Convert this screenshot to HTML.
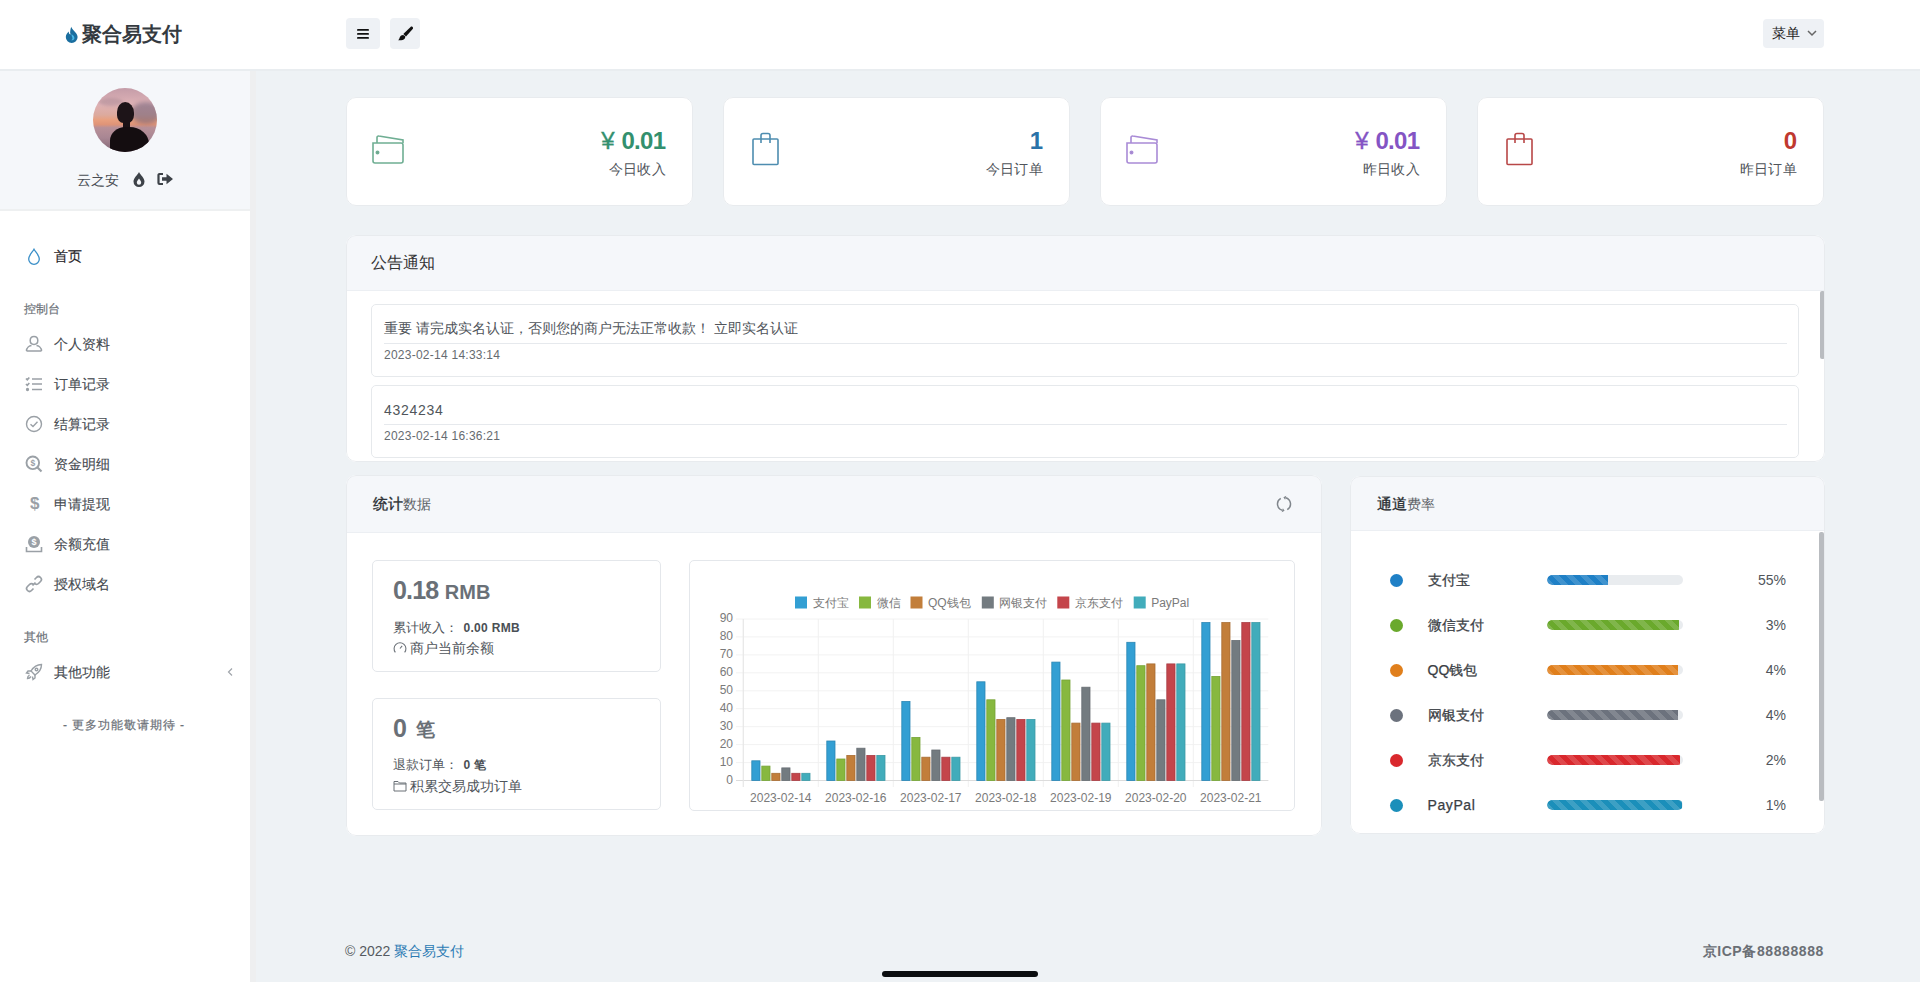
<!DOCTYPE html>
<html><head><meta charset="utf-8">
<style>
*{box-sizing:border-box;margin:0;padding:0}
html,body{width:1920px;height:982px;overflow:hidden}
body{font-family:"Liberation Sans",sans-serif;background:#eef2f5;color:#4a4f55;position:relative;font-size:14px}
.abs{position:absolute}
#top{left:0;top:0;width:1920px;height:71px;background:#fff;border-bottom:2px solid #e9edf0}
#side{left:0;top:71px;width:256px;height:911px;background:#fff;border-right:6px solid #eeeff0}
#prof{left:0;top:71px;width:250px;height:140px;background:#f5f7fa;border-bottom:2px solid #eef0f1}
.card{position:absolute;background:#fff;border-radius:10px}
.card::after,.panel::after{content:"";position:absolute;left:0;top:0;right:0;bottom:0;border:1px solid #e8ebee;border-radius:inherit;pointer-events:none}
.nav{position:absolute;left:54px;font-size:14px;color:#464b51;line-height:16px;white-space:nowrap;-webkit-text-stroke:.1px #464b51}
.navi{position:absolute;left:25px}
.sect{position:absolute;left:24px;font-size:12px;color:#6c7178;line-height:14px;-webkit-text-stroke:.2px #6c7178}
.tbtn{position:absolute;background:#eef1f5;border-radius:4px}
.num{position:absolute;font-size:24px;font-weight:bold;line-height:28px;margin-top:1px;text-align:right;white-space:nowrap}
.lbl{position:absolute;font-size:14px;color:#50555b;line-height:16px;text-align:right;white-space:nowrap;letter-spacing:.3px}
.panel{position:absolute;background:#fff;border-radius:10px;overflow:hidden}
.ph{position:absolute;left:0;top:0;right:0;background:#f5f7fa;border-bottom:1px solid #eceff3}
.ptitle{position:absolute;font-size:15.5px;color:#333;line-height:18px;white-space:nowrap}
.nbox{position:absolute;border:1px solid #e6e9ec;border-radius:5px;background:#fff}
.ntext{position:absolute;left:12px;font-size:14px;color:#50555b;white-space:nowrap;line-height:16px}
.nline{position:absolute;left:12px;right:11px;height:1px;background:#e6e9ed}
.ndate{position:absolute;left:12px;font-size:12px;letter-spacing:.25px;color:#666b70;white-space:nowrap;line-height:14px}
.sbox{position:absolute;border:1px solid #e4e7eb;border-radius:5px;background:#fff}
.crow{position:absolute;left:0;width:475px;height:20px}
.dot{position:absolute;left:39.5px;top:3.5px;width:13px;height:13px;border-radius:50%}
.clbl{position:absolute;left:77.5px;top:2px;font-size:14px;color:#3a3e44;line-height:16px;white-space:nowrap;-webkit-text-stroke:.25px #3a3e44}
.track{position:absolute;left:197px;top:5px;width:136px;height:10px;border-radius:5px;background:#e9ecef;overflow:hidden}
.fill{position:absolute;left:0;top:0;height:10px;border-radius:5px 0 0 5px}
.pct{position:absolute;right:39px;top:2px;font-size:14px;color:#50555b;line-height:16px}
</style></head><body>
<div id="top" class="abs"></div>
<div id="side" class="abs"></div>
<div id="prof" class="abs"></div>

<!-- logo -->
<svg class="abs" style="left:65px;top:26px" width="14" height="17" viewBox="0 0 14 17">
<path d="M6.2 0.8 C6.8 3.6 12.6 7 12.6 11 A5.9 5.9 0 0 1 0.8 11 C0.8 8.6 2.6 6.8 3.8 5.6 C3.6 7.6 4.6 8.6 5.6 8.6 C4.6 6.6 5.4 3.4 6.2 0.8Z" fill="#1a6e9f"/>
<path d="M6.6 8 C7.8 9.4 9.6 10.2 9.4 12.2 C9.2 13.8 7.6 14.6 6 14.2 C7.4 13.6 7.8 12.4 7.2 11.2 C6.8 10.2 6.4 9.4 6.6 8Z" fill="#48b8e8"/>
</svg>
<div class="abs" style="left:82px;top:22px;font-size:20px;font-weight:bold;color:#343a40;line-height:24px;white-space:nowrap;">聚合易支付</div>

<!-- top buttons -->
<div class="tbtn" style="left:346px;top:18px;width:34px;height:31px"></div>
<svg class="abs" style="left:356px;top:27px" width="14" height="13" viewBox="0 0 14 13">
<rect x="1" y="2" width="12" height="1.8" rx=".9" fill="#111"/>
<rect x="1" y="6" width="12" height="1.8" rx=".9" fill="#111"/>
<rect x="1" y="10" width="12" height="1.8" rx=".9" fill="#111"/>
</svg>
<div class="tbtn" style="left:390px;top:18px;width:30px;height:31px"></div>
<svg class="abs" style="left:397px;top:26px" width="16" height="16" viewBox="0 0 16 16">
<path d="M15.9 2.7 C16.4 1.3 15 0 13.6 0.9 L6.3 8 L9 10.5 Z" fill="#111"/>
<path d="M6.1 9 C4.3 9 3 10.2 2.6 11.8 C2.3 13 1.9 13.7 1.1 14.2 C3.5 14.7 6.3 14.1 7.6 12.7 C8.4 11.8 8.4 10.6 8 10.1 Z" fill="#111"/>
</svg>
<div class="tbtn" style="left:1763px;top:19px;width:61px;height:29px"></div>
<div class="abs" style="left:1772px;top:25px;font-size:14px;color:#222;line-height:16px">菜单</div>
<svg class="abs" style="left:1806px;top:29px" width="12" height="8" viewBox="0 0 12 8"><path d="M2 2 L6 6 L10 2" stroke="#666" stroke-width="1.5" fill="none"/></svg>

<!-- avatar -->
<div class="abs" style="left:93px;top:88px;width:64px;height:64px;border-radius:50%;overflow:hidden;background:linear-gradient(180deg,#c49ca8 0%,#deb2b6 25%,#dcaa9e 42%,#e89f7e 50%,#df9478 57%,#b89098 62%,#a88693 78%,#806572 100%)">
<div class="abs" style="left:38px;top:14px;width:30px;height:22px;border-radius:50%;background:rgba(110,95,120,.55);filter:blur(2px)"></div>
<div class="abs" style="left:6px;top:10px;width:24px;height:8px;border-radius:50%;background:rgba(150,120,135,.35);filter:blur(1.5px)"></div>
<div class="abs" style="left:24px;top:14px;width:17px;height:21px;border-radius:48% 52% 38% 38%;background:#1d1418"></div>
<div class="abs" style="left:30px;top:32px;width:7px;height:8px;background:#1a1115"></div>
<div class="abs" style="left:17px;top:39px;width:39px;height:34px;border-radius:40% 50% 0 0;background:#140d10"></div>
</div>
<div class="abs" style="left:77px;top:172px;font-size:14px;color:#484d53;line-height:16px">云之安</div>
<svg class="abs" style="left:132px;top:171px" width="14" height="16" viewBox="0 0 14 16">
<path d="M7 1 C8.5 4 12.5 7 12.5 10.5 A5.5 5.5 0 0 1 1.5 10.5 C1.5 7 5.5 4 7 1Z" fill="#3d4248"/>
<path d="M7 7.5 C7.8 9 9.2 10.2 9.2 11.6 A2.2 2.2 0 0 1 4.8 11.6 C4.8 10.2 6.2 9 7 7.5Z" fill="#f5f7fa"/>
</svg>
<svg class="abs" style="left:157px;top:172px" width="17" height="14" viewBox="0 0 17 14">
<path d="M6 2 H2.5 A1 1 0 0 0 1.5 3 V11 A1 1 0 0 0 2.5 12 H6" stroke="#3d4248" stroke-width="2.2" fill="none"/>
<path d="M5 5.2 H9.5 V1.8 L16 7 L9.5 12.2 V8.8 H5Z" fill="#3d4248"/>
</svg>

<!-- nav -->
<svg class="abs" style="left:27px;top:248px" width="14" height="17" viewBox="0 0 14 17"><path d="M7 1.2 C8.6 4.2 12.3 7.4 12.3 11 A5.3 5.3 0 0 1 1.7 11 C1.7 7.4 5.4 4.2 7 1.2Z" stroke="#3a8fc8" stroke-width="1.3" fill="none"/></svg>
<div class="nav" style="top:248px;color:#1f2327;-webkit-text-stroke:.15px #1f2327">首页</div>
<div class="sect" style="top:302px">控制台</div>

<svg class="navi" style="top:335px" width="18" height="17" viewBox="0 0 18 17" fill="none" stroke="#9aa0a6" stroke-width="1.5"><path d="M9 1.5 C6.5 1.5 5.2 3.4 5.2 5.6 C5.2 7.8 6.8 9.5 9 9.5 C11.2 9.5 12.8 7.8 12.8 5.6 C12.8 3.4 11.5 1.5 9 1.5Z"/><path d="M1.5 16 C1.5 12.5 4.5 10.8 6.5 10.5 M16.5 16 C16.5 12.5 13.5 10.8 11.5 10.5 M1.5 16 H16.5"/></svg>
<div class="nav" style="top:336px">个人资料</div>
<svg class="navi" style="top:376px" width="18" height="16" viewBox="0 0 18 16" fill="none" stroke="#9aa0a6" stroke-width="1.7"><path d="M1 2.5 L2.3 3.8 L4.3 1.5 M1 8 L2.3 9.3 L4.3 7 M7 3 H17 M7 8 H17 M7 13.5 H17"/><circle cx="2.5" cy="13.5" r=".8" fill="#9aa0a6"/></svg>
<div class="nav" style="top:376px">订单记录</div>
<svg class="navi" style="top:415px" width="18" height="18" viewBox="0 0 18 18" fill="none" stroke="#9aa0a6" stroke-width="1.4"><circle cx="9" cy="9" r="7.5"/><path d="M5.5 9.2 L8 11.5 L12.5 6.8"/></svg>
<div class="nav" style="top:416px">结算记录</div>
<svg class="navi" style="top:455px" width="18" height="18" viewBox="0 0 18 18" fill="none" stroke="#9aa0a6" stroke-width="1.9"><circle cx="7.8" cy="7.8" r="6.3"/><path d="M12.5 12.5 L16.5 16.5" stroke-width="2.2"/><text x="7.8" y="10.8" font-size="8.5" text-anchor="middle" fill="#9aa0a6" stroke="none" font-weight="bold" font-family="Liberation Sans">$</text></svg>
<div class="nav" style="top:456px">资金明细</div>
<div class="navi" style="top:494px;left:30px;font-size:17px;font-weight:bold;color:#9aa0a6;line-height:20px">$</div>
<div class="nav" style="top:496px">申请提现</div>
<svg class="navi" style="top:535px" width="18" height="18" viewBox="0 0 18 18"><circle cx="9" cy="7" r="6" fill="#9aa0a6"/><text x="9" y="10.2" font-size="9" text-anchor="middle" fill="#fff" font-weight="bold" font-family="Liberation Sans">$</text><path d="M1.5 12 V16.5 H16.5 V12" stroke="#9aa0a6" stroke-width="1.6" fill="none"/></svg>
<div class="nav" style="top:536px">余额充值</div>
<svg class="navi" style="top:575px" width="18" height="18" viewBox="0 0 18 18" fill="none" stroke="#9aa0a6" stroke-width="1.7"><path d="M7.5 10.5 L10.5 7.5"/><path d="M9.5 4.5 L11.5 2.5 A2.8 2.8 0 0 1 15.5 6.5 L13.5 8.5 A2.8 2.8 0 0 1 9.5 8.5"/><path d="M8.5 13.5 L6.5 15.5 A2.8 2.8 0 0 1 2.5 11.5 L4.5 9.5 A2.8 2.8 0 0 1 8.5 9.5"/></svg>
<div class="nav" style="top:576px">授权域名</div>
<div class="sect" style="top:630px">其他</div>
<svg class="navi" style="top:663px" width="18" height="18" viewBox="0 0 18 18" fill="none" stroke="#9aa0a6" stroke-width="1.4"><path d="M16.5 1.5 C12 1.5 8.5 4 6 8 L10 12 C14 9.5 16.5 6 16.5 1.5Z"/><circle cx="11.5" cy="6.5" r="1.3"/><path d="M6 8 L3 8 L1.5 10 L4.5 10.5 M10 12 L10 15 L8 16.5 L7.5 13.5 M4.5 12 C3 13 2.5 15 2.5 15.5 C3 15.5 5 15 6 13.5"/></svg>
<div class="nav" style="top:664px">其他功能</div>
<svg class="abs" style="left:226px;top:667px" width="8" height="10" viewBox="0 0 8 10"><path d="M6 1.5 L2.5 5 L6 8.5" stroke="#a0a5ab" stroke-width="1.2" fill="none"/></svg>
<div class="abs" style="left:63px;top:718px;font-size:12px;color:#6c7178;line-height:14px;white-space:nowrap;letter-spacing:.95px;-webkit-text-stroke:.2px #6c7178">- 更多功能敬请期待 -</div>

<div class="card" style="left:346px;top:97px;width:347px;height:109px"></div>
<svg class="abs" style="left:371px;top:134px" width="34" height="31" viewBox="0 0 34 31" fill="none" stroke="#6fae93" stroke-width="1.6"><path d="M2 9 V27 A2 2 0 0 0 4 29 H30 A2 2 0 0 0 32 27 V11 A2 2 0 0 0 30 9 H2Z"/><path d="M6 9 V3.5 A1.5 1.5 0 0 1 7.8 2 L32 6 V9"/><circle cx="6.5" cy="18.5" r="1.2" fill="#7a8a84"/></svg>
<div class="num" style="right:1254px;top:126px;color:#33906e"><span style="font-weight:normal;-webkit-text-stroke:.35px currentColor">¥</span> <span style="letter-spacing:-.7px">0.0</span>1</div>
<div class="lbl" style="right:1254px;top:161px">今日收入</div>
<div class="card" style="left:723px;top:97px;width:347px;height:109px"></div>
<svg class="abs" style="left:751px;top:132px" width="29" height="34" viewBox="0 0 29 34" fill="none" stroke="#4e8db0" stroke-width="1.6"><rect x="2" y="7" width="25" height="25.5" rx="1"/><path d="M10 11 V3.5 A2 2 0 0 1 12 1.5 H17 A2 2 0 0 1 19 3.5 V11"/></svg>
<div class="num" style="right:877px;top:126px;color:#2a72a8">1</div>
<div class="lbl" style="right:877px;top:161px">今日订单</div>
<div class="card" style="left:1100px;top:97px;width:347px;height:109px"></div>
<svg class="abs" style="left:1125px;top:134px" width="34" height="31" viewBox="0 0 34 31" fill="none" stroke="#a98bd6" stroke-width="1.6"><path d="M2 9 V27 A2 2 0 0 0 4 29 H30 A2 2 0 0 0 32 27 V11 A2 2 0 0 0 30 9 H2Z"/><path d="M6 9 V3.5 A1.5 1.5 0 0 1 7.8 2 L32 6 V9"/><circle cx="6.5" cy="18.5" r="1.2" fill="#9a88b0"/></svg>
<div class="num" style="right:500px;top:126px;color:#8454c4"><span style="font-weight:normal;-webkit-text-stroke:.35px currentColor">¥</span> <span style="letter-spacing:-.7px">0.0</span>1</div>
<div class="lbl" style="right:500px;top:161px">昨日收入</div>
<div class="card" style="left:1477px;top:97px;width:347px;height:109px"></div>
<svg class="abs" style="left:1505px;top:132px" width="29" height="34" viewBox="0 0 29 34" fill="none" stroke="#b84747" stroke-width="1.6"><rect x="2" y="7" width="25" height="25.5" rx="1"/><path d="M10 11 V3.5 A2 2 0 0 1 12 1.5 H17 A2 2 0 0 1 19 3.5 V11"/></svg>
<div class="num" style="right:123px;top:126px;color:#c0392f">0</div>
<div class="lbl" style="right:123px;top:161px">昨日订单</div>
<div class="panel" style="left:346px;top:235px;width:1479px;height:227px">
<div class="ph" style="height:56px"></div>
<div class="ptitle" style="left:25px;top:19px">公告通知</div>
<div class="nbox" style="left:25px;top:69px;width:1428px;height:73px">
<div class="ntext" style="top:15px">重要 请完成实名认证，否则您的商户无法正常收款！ 立即实名认证</div>
<div class="nline" style="top:38px"></div>
<div class="ndate" style="top:43px">2023-02-14 14:33:14</div>
</div>
<div class="nbox" style="left:25px;top:150px;width:1428px;height:73px">
<div class="ntext" style="top:16px;letter-spacing:.7px">4324234</div>
<div class="nline" style="top:38px"></div>
<div class="ndate" style="top:43px">2023-02-14 16:36:21</div>
</div>
<div class="abs" style="left:1474px;top:56px;width:5px;height:68px;background:#b9bcc0;border-radius:2px"></div>
</div>
<div class="panel" style="left:346px;top:475px;width:976px;height:361px">
<div class="ph" style="height:58px"></div>
<div class="ptitle" style="left:27px;top:20px;font-size:15px"><span style="color:#2b2f33;-webkit-text-stroke:.35px #2b2f33">统计</span><span style="color:#5c6166;font-size:14px">数据</span></div>
<svg class="abs" style="left:929px;top:20px" width="18" height="18" viewBox="0 0 18 18"><g fill="none" stroke="#80868c" stroke-width="1.5"><path d="M12.25 14.63 A6.5 6.5 0 0 0 10.68 2.72"/><path d="M5.75 3.37 A6.5 6.5 0 0 0 7.32 15.28"/></g><path d="M8.4 2.2 L11.3 0.7 L10.1 4.8Z M9.6 15.8 L6.7 17.3 L7.9 13.2Z" fill="#80868c"/></svg>
<div class="sbox" style="left:26px;top:85px;width:289px;height:112px">
<div class="abs" style="left:20px;top:15px;white-space:nowrap;color:#6a7077;font-weight:bold;line-height:28px"><span style="font-size:25px;letter-spacing:-.8px">0.18</span> <span style="font-size:20px;margin-left:2.5px">RMB</span></div>
<div class="abs" style="left:20px;top:59px;white-space:nowrap;color:#50555b;font-size:13px;line-height:16px">累计收入：<b style="font-size:12px;color:#4a4f55;letter-spacing:.3px;margin-left:5.5px">0.00 RMB</b></div>
<div class="abs" style="left:20px;top:79px;white-space:nowrap;color:#50555b;font-size:14px;line-height:16px"><svg width="14" height="14" viewBox="0 0 13 13" style="vertical-align:-2px;margin-right:3px" fill="none" stroke="#6a7077" stroke-width="1"><path d="M2.2 10.5 A5.5 5.5 0 1 1 10.8 10.5"/><path d="M6.5 7 L8.5 4.5"/></svg>商户当前余额</div>
</div>
<div class="sbox" style="left:26px;top:223px;width:289px;height:112px">
<div class="abs" style="left:20px;top:15px;white-space:nowrap;color:#6a7077;font-weight:bold;line-height:28px"><span style="font-size:25px">0</span><span style="font-size:19px;margin-left:9px;position:relative;top:-1px">笔</span></div>
<div class="abs" style="left:20px;top:58px;white-space:nowrap;color:#50555b;font-size:13px;line-height:16px">退款订单：<b style="font-size:12px;color:#4a4f55;letter-spacing:.3px;margin-left:5.5px">0 笔</b></div>
<div class="abs" style="left:20px;top:79px;white-space:nowrap;color:#50555b;font-size:14px;line-height:16px"><svg width="14" height="12" viewBox="0 0 14 12" style="vertical-align:-1px;margin-right:3px" fill="none" stroke="#6a7077" stroke-width="1"><path d="M1 1.5 H5 L6.5 3 H13 V11 H1Z M1 4 H13"/></svg>积累交易成功订单</div>
</div>
<div class="sbox" style="left:343px;top:85px;width:606px;height:251px"></div>
</div>
<svg class="abs" style="left:690px;top:561px" width="604" height="250" viewBox="690 561 604 250" font-family="Liberation Sans">
<line x1="736" y1="780.5" x2="1268.3" y2="780.5" stroke="#f2f2f2" stroke-width="1"/>
<text x="733" y="783.9" font-size="12" fill="#7a7a7a" text-anchor="end">0</text>
<line x1="736" y1="762.6" x2="1268.3" y2="762.6" stroke="#f2f2f2" stroke-width="1"/>
<text x="733" y="766.0" font-size="12" fill="#7a7a7a" text-anchor="end">10</text>
<line x1="736" y1="744.6" x2="1268.3" y2="744.6" stroke="#f2f2f2" stroke-width="1"/>
<text x="733" y="748.0" font-size="12" fill="#7a7a7a" text-anchor="end">20</text>
<line x1="736" y1="726.7" x2="1268.3" y2="726.7" stroke="#f2f2f2" stroke-width="1"/>
<text x="733" y="730.1" font-size="12" fill="#7a7a7a" text-anchor="end">30</text>
<line x1="736" y1="708.7" x2="1268.3" y2="708.7" stroke="#f2f2f2" stroke-width="1"/>
<text x="733" y="712.1" font-size="12" fill="#7a7a7a" text-anchor="end">40</text>
<line x1="736" y1="690.8" x2="1268.3" y2="690.8" stroke="#f2f2f2" stroke-width="1"/>
<text x="733" y="694.2" font-size="12" fill="#7a7a7a" text-anchor="end">50</text>
<line x1="736" y1="672.8" x2="1268.3" y2="672.8" stroke="#f2f2f2" stroke-width="1"/>
<text x="733" y="676.2" font-size="12" fill="#7a7a7a" text-anchor="end">60</text>
<line x1="736" y1="654.9" x2="1268.3" y2="654.9" stroke="#f2f2f2" stroke-width="1"/>
<text x="733" y="658.3" font-size="12" fill="#7a7a7a" text-anchor="end">70</text>
<line x1="736" y1="636.9" x2="1268.3" y2="636.9" stroke="#f2f2f2" stroke-width="1"/>
<text x="733" y="640.3" font-size="12" fill="#7a7a7a" text-anchor="end">80</text>
<line x1="736" y1="619.0" x2="1268.3" y2="619.0" stroke="#f2f2f2" stroke-width="1"/>
<text x="733" y="622.4" font-size="12" fill="#7a7a7a" text-anchor="end">90</text>
<line x1="743.3" y1="619" x2="743.3" y2="787" stroke="#f0f0f0" stroke-width="1"/>
<line x1="818.3" y1="619" x2="818.3" y2="787" stroke="#f0f0f0" stroke-width="1"/>
<line x1="893.3" y1="619" x2="893.3" y2="787" stroke="#f0f0f0" stroke-width="1"/>
<line x1="968.3" y1="619" x2="968.3" y2="787" stroke="#f0f0f0" stroke-width="1"/>
<line x1="1043.3" y1="619" x2="1043.3" y2="787" stroke="#f0f0f0" stroke-width="1"/>
<line x1="1118.3" y1="619" x2="1118.3" y2="787" stroke="#f0f0f0" stroke-width="1"/>
<line x1="1193.3" y1="619" x2="1193.3" y2="787" stroke="#f0f0f0" stroke-width="1"/>
<line x1="736" y1="780.5" x2="1268.3" y2="780.5" stroke="#dcdcdc" stroke-width="1"/>
<line x1="743.3" y1="619" x2="743.3" y2="787" stroke="#e6e6e6" stroke-width="1"/>
<rect x="751.8" y="760.8" width="8.2" height="19.7" fill="#339fd3" stroke="#2b86b3" stroke-width="0.8"/>
<rect x="761.8" y="766.1" width="8.2" height="14.4" fill="#87b83f" stroke="#76a336" stroke-width="0.8"/>
<rect x="771.8" y="773.3" width="8.2" height="7.2" fill="#c27e3a" stroke="#a86d34" stroke-width="0.8"/>
<rect x="781.8" y="767.9" width="8.2" height="12.6" fill="#737b80" stroke="#666d72" stroke-width="0.8"/>
<rect x="791.8" y="773.3" width="8.2" height="7.2" fill="#c4454b" stroke="#a93d44" stroke-width="0.8"/>
<rect x="801.8" y="773.3" width="8.2" height="7.2" fill="#41acbb" stroke="#3c9aa6" stroke-width="0.8"/>
<text x="780.8" y="802" font-size="12" fill="#7a7a7a" text-anchor="middle">2023-02-14</text>
<rect x="826.8" y="741.0" width="8.2" height="39.5" fill="#339fd3" stroke="#2b86b3" stroke-width="0.8"/>
<rect x="836.8" y="759.0" width="8.2" height="21.5" fill="#87b83f" stroke="#76a336" stroke-width="0.8"/>
<rect x="846.8" y="755.4" width="8.2" height="25.1" fill="#c27e3a" stroke="#a86d34" stroke-width="0.8"/>
<rect x="856.8" y="748.2" width="8.2" height="32.3" fill="#737b80" stroke="#666d72" stroke-width="0.8"/>
<rect x="866.8" y="755.4" width="8.2" height="25.1" fill="#c4454b" stroke="#a93d44" stroke-width="0.8"/>
<rect x="876.8" y="755.4" width="8.2" height="25.1" fill="#41acbb" stroke="#3c9aa6" stroke-width="0.8"/>
<text x="855.8" y="802" font-size="12" fill="#7a7a7a" text-anchor="middle">2023-02-16</text>
<rect x="901.8" y="701.5" width="8.2" height="79.0" fill="#339fd3" stroke="#2b86b3" stroke-width="0.8"/>
<rect x="911.8" y="737.4" width="8.2" height="43.1" fill="#87b83f" stroke="#76a336" stroke-width="0.8"/>
<rect x="921.8" y="757.2" width="8.2" height="23.3" fill="#c27e3a" stroke="#a86d34" stroke-width="0.8"/>
<rect x="931.8" y="750.0" width="8.2" height="30.5" fill="#737b80" stroke="#666d72" stroke-width="0.8"/>
<rect x="941.8" y="757.2" width="8.2" height="23.3" fill="#c4454b" stroke="#a93d44" stroke-width="0.8"/>
<rect x="951.8" y="757.2" width="8.2" height="23.3" fill="#41acbb" stroke="#3c9aa6" stroke-width="0.8"/>
<text x="930.8" y="802" font-size="12" fill="#7a7a7a" text-anchor="middle">2023-02-17</text>
<rect x="976.8" y="681.8" width="8.2" height="98.7" fill="#339fd3" stroke="#2b86b3" stroke-width="0.8"/>
<rect x="986.8" y="699.8" width="8.2" height="80.8" fill="#87b83f" stroke="#76a336" stroke-width="0.8"/>
<rect x="996.8" y="719.5" width="8.2" height="61.0" fill="#c27e3a" stroke="#a86d34" stroke-width="0.8"/>
<rect x="1006.8" y="717.7" width="8.2" height="62.8" fill="#737b80" stroke="#666d72" stroke-width="0.8"/>
<rect x="1016.8" y="719.5" width="8.2" height="61.0" fill="#c4454b" stroke="#a93d44" stroke-width="0.8"/>
<rect x="1026.8" y="719.5" width="8.2" height="61.0" fill="#41acbb" stroke="#3c9aa6" stroke-width="0.8"/>
<text x="1005.8" y="802" font-size="12" fill="#7a7a7a" text-anchor="middle">2023-02-18</text>
<rect x="1051.8" y="662.1" width="8.2" height="118.4" fill="#339fd3" stroke="#2b86b3" stroke-width="0.8"/>
<rect x="1061.8" y="680.0" width="8.2" height="100.5" fill="#87b83f" stroke="#76a336" stroke-width="0.8"/>
<rect x="1071.8" y="723.1" width="8.2" height="57.4" fill="#c27e3a" stroke="#a86d34" stroke-width="0.8"/>
<rect x="1081.8" y="687.2" width="8.2" height="93.3" fill="#737b80" stroke="#666d72" stroke-width="0.8"/>
<rect x="1091.8" y="723.1" width="8.2" height="57.4" fill="#c4454b" stroke="#a93d44" stroke-width="0.8"/>
<rect x="1101.8" y="723.1" width="8.2" height="57.4" fill="#41acbb" stroke="#3c9aa6" stroke-width="0.8"/>
<text x="1080.8" y="802" font-size="12" fill="#7a7a7a" text-anchor="middle">2023-02-19</text>
<rect x="1126.8" y="642.3" width="8.2" height="138.2" fill="#339fd3" stroke="#2b86b3" stroke-width="0.8"/>
<rect x="1136.8" y="665.7" width="8.2" height="114.8" fill="#87b83f" stroke="#76a336" stroke-width="0.8"/>
<rect x="1146.8" y="663.9" width="8.2" height="116.6" fill="#c27e3a" stroke="#a86d34" stroke-width="0.8"/>
<rect x="1156.8" y="699.8" width="8.2" height="80.8" fill="#737b80" stroke="#666d72" stroke-width="0.8"/>
<rect x="1166.8" y="663.9" width="8.2" height="116.6" fill="#c4454b" stroke="#a93d44" stroke-width="0.8"/>
<rect x="1176.8" y="663.9" width="8.2" height="116.6" fill="#41acbb" stroke="#3c9aa6" stroke-width="0.8"/>
<text x="1155.8" y="802" font-size="12" fill="#7a7a7a" text-anchor="middle">2023-02-20</text>
<rect x="1201.8" y="622.6" width="8.2" height="157.9" fill="#339fd3" stroke="#2b86b3" stroke-width="0.8"/>
<rect x="1211.8" y="676.4" width="8.2" height="104.1" fill="#87b83f" stroke="#76a336" stroke-width="0.8"/>
<rect x="1221.8" y="622.6" width="8.2" height="157.9" fill="#c27e3a" stroke="#a86d34" stroke-width="0.8"/>
<rect x="1231.8" y="640.5" width="8.2" height="140.0" fill="#737b80" stroke="#666d72" stroke-width="0.8"/>
<rect x="1241.8" y="622.6" width="8.2" height="157.9" fill="#c4454b" stroke="#a93d44" stroke-width="0.8"/>
<rect x="1251.8" y="622.6" width="8.2" height="157.9" fill="#41acbb" stroke="#3c9aa6" stroke-width="0.8"/>
<text x="1230.8" y="802" font-size="12" fill="#7a7a7a" text-anchor="middle">2023-02-21</text>
<rect x="795" y="596.5" width="12" height="12" fill="#339fd3"/>
<text x="812.5" y="606.5" font-size="12" fill="#7a7a7a">支付宝</text>
<rect x="859" y="596.5" width="12" height="12" fill="#87b83f"/>
<text x="876.5" y="606.5" font-size="12" fill="#7a7a7a">微信</text>
<rect x="910.5" y="596.5" width="12" height="12" fill="#c27e3a"/>
<text x="928.0" y="606.5" font-size="12" fill="#7a7a7a">QQ钱包</text>
<rect x="981.8" y="596.5" width="12" height="12" fill="#737b80"/>
<text x="999.3" y="606.5" font-size="12" fill="#7a7a7a">网银支付</text>
<rect x="1057.3" y="596.5" width="12" height="12" fill="#c4454b"/>
<text x="1074.8" y="606.5" font-size="12" fill="#7a7a7a">京东支付</text>
<rect x="1133.7" y="596.5" width="12" height="12" fill="#41acbb"/>
<text x="1151.2" y="606.5" font-size="12" fill="#7a7a7a">PayPal</text>
</svg>
<div class="panel" style="left:1350px;top:476px;width:475px;height:358px">
<div class="ph" style="height:55px"></div>
<div class="ptitle" style="left:27px;top:19px;font-size:15px"><span style="color:#2b2f33;-webkit-text-stroke:.35px #2b2f33">通道</span><span style="color:#5c6166;font-size:14px">费率</span></div>
<div class="crow" style="top:94px"><div class="dot" style="background:#1f80c6"></div><div class="clbl">支付宝</div><div class="track"><div class="fill" style="width:45%;background-color:#1f80c6;background-image:repeating-linear-gradient(45deg,rgba(255,255,255,.15) 0 5px,transparent 5px 10px)"></div></div><div class="pct">55%</div></div>
<div class="crow" style="top:139px"><div class="dot" style="background:#6aa92c"></div><div class="clbl">微信支付</div><div class="track"><div class="fill" style="width:97%;background-color:#6aa92c;background-image:repeating-linear-gradient(45deg,rgba(255,255,255,.15) 0 5px,transparent 5px 10px)"></div></div><div class="pct">3%</div></div>
<div class="crow" style="top:184px"><div class="dot" style="background:#e07f1c"></div><div class="clbl">QQ钱包</div><div class="track"><div class="fill" style="width:96%;background-color:#e07f1c;background-image:repeating-linear-gradient(45deg,rgba(255,255,255,.15) 0 5px,transparent 5px 10px)"></div></div><div class="pct">4%</div></div>
<div class="crow" style="top:229px"><div class="dot" style="background:#6c727d"></div><div class="clbl">网银支付</div><div class="track"><div class="fill" style="width:96%;background-color:#6c727d;background-image:repeating-linear-gradient(45deg,rgba(255,255,255,.15) 0 5px,transparent 5px 10px)"></div></div><div class="pct">4%</div></div>
<div class="crow" style="top:274px"><div class="dot" style="background:#d9282d"></div><div class="clbl">京东支付</div><div class="track"><div class="fill" style="width:98%;background-color:#d9282d;background-image:repeating-linear-gradient(45deg,rgba(255,255,255,.15) 0 5px,transparent 5px 10px)"></div></div><div class="pct">2%</div></div>
<div class="crow" style="top:319px"><div class="dot" style="background:#1b8fba"></div><div class="clbl" style="letter-spacing:.6px">PayPal</div><div class="track"><div class="fill" style="width:99%;background-color:#1b8fba;background-image:repeating-linear-gradient(45deg,rgba(255,255,255,.15) 0 5px,transparent 5px 10px)"></div></div><div class="pct">1%</div></div>
<div class="abs" style="left:469px;top:56px;width:5px;height:269px;background:#b9bcc0;border-radius:2px"></div>
</div>
<div class="abs" style="left:345px;top:943px;font-size:14px;color:#555a60;line-height:16px;white-space:nowrap">© 2022 <span style="color:#2b7ab3">聚合易支付</span></div>
<div class="abs" style="right:96px;top:943px;font-size:14px;color:#62676d;line-height:16px;white-space:nowrap;font-weight:bold;letter-spacing:.6px;color:#6a6f75">京ICP备88888888</div>
<div class="abs" style="left:882px;top:971px;width:156px;height:6px;border-radius:3px;background:#0b0d10"></div>
</body></html>
